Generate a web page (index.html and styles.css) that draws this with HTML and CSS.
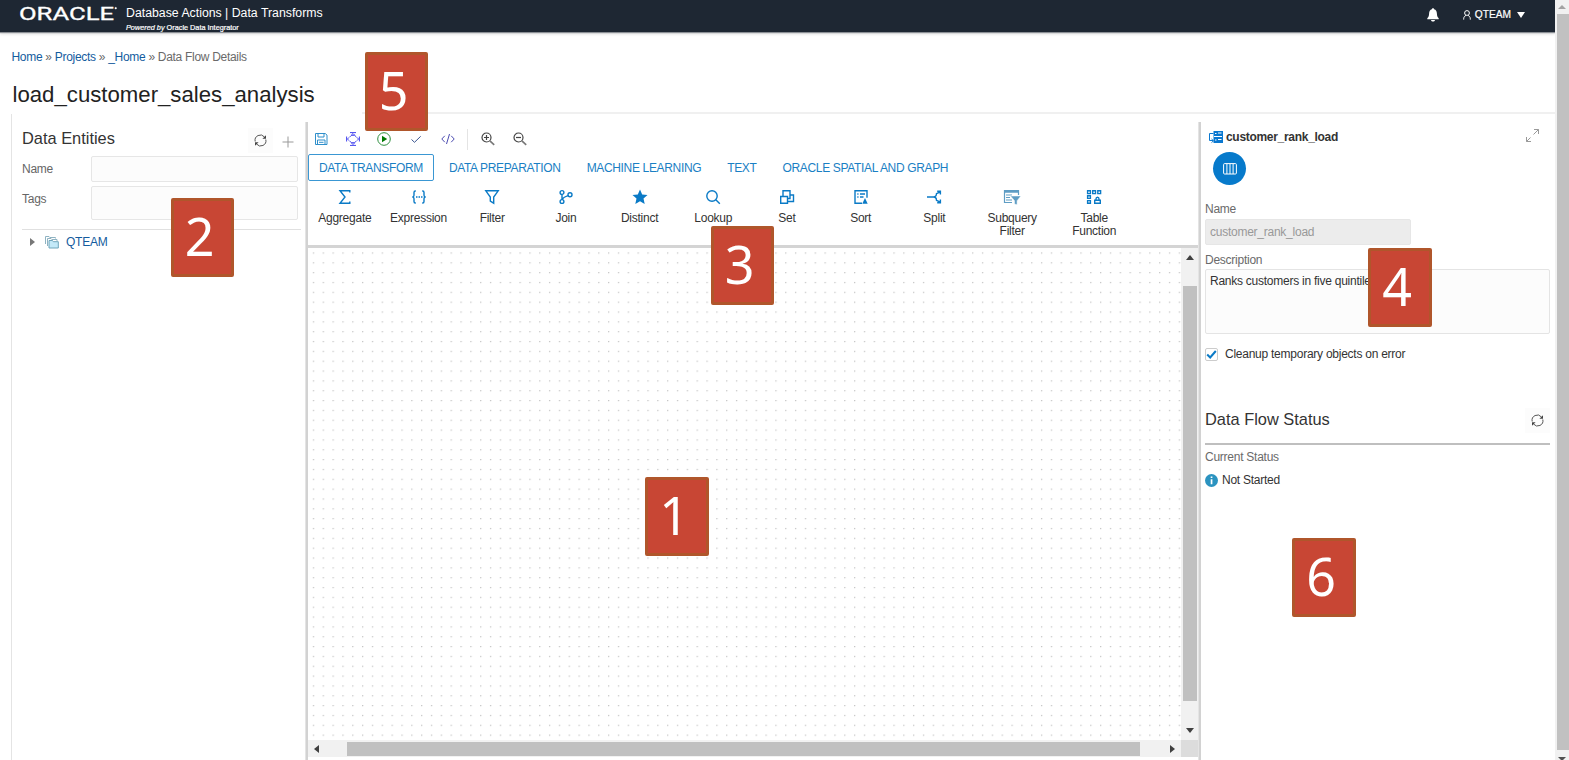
FILE: index.html
```html
<!DOCTYPE html>
<html lang="en">
<head>
<meta charset="utf-8">
<title>Data Transforms</title>
<link rel="stylesheet" href="styles.css">
</head>
<body>
<div class="page">
  <div class="app">
    <header class="topbar">
      <svg class="logo" width="99" height="24" viewBox="0 0 99 24"><text x="0" y="16.500" textLength="95" lengthAdjust="spacingAndGlyphs">ORACLE</text><circle cx="96.700" cy="5.200" r="0.900"/></svg>
      <div class="product">
        <div class="product-name">Database Actions | Data Transforms</div>
        <div class="product-sub"><i>Powered by</i> Oracle Data Integrator</div>
      </div>
      <svg class="bell" width="12" height="14" viewBox="0 0 12 14"><path d="M6 .3c.7 0 1 .4 1.100 1C9 1.800 9.800 3.400 9.900 5.500c.1 2.300.4 3.500 1.800 4.800v.9H.3v-.9C1.700 9 2 7.800 2.100 5.500 2.200 3.400 3 1.800 4.900 1.300c.1-.6.400-1 1.100-1zM4 12h4c-.2 1-1 1.600-2 1.600S4.200 13 4 12z"/></svg>
      <svg class="person" width="8" height="10" viewBox="0 0 8 10"><circle cx="4" cy="3" r="2.400"/><path d="M.7 9.600V8.800C.7 7 1.700 6 3 5.400M7.300 9.600V8.800C7.300 7 6.300 6 5 5.400"/></svg>
      <span class="user">QTEAM</span>
      <svg class="caret" width="8" height="6" viewBox="0 0 8 6"><path d="M0 0h8L4 6z"/></svg>
    </header>
    <nav class="crumbs"><a>Home</a> » <a>Projects</a> » <a>_Home</a> » Data Flow Details</nav>
    <h1 class="title">load_customer_sales_analysis</h1>
    <div class="rule"></div>

    <main class="columns">
      <aside class="entities">
        <div class="entities-head">
          <h2>Data Entities</h2>
          <span class="iconbtn"><svg width="13" height="13" viewBox="0 0 13 13"><path class="ln" d="M1.200 7.500A5.300 5.300 0 0 1 10.500 3M11.800 5.500A5.300 5.300 0 0 1 2.500 10"/><path d="M12 1.200v3.600H8.400zM1 11.800V8.200h3.600z"/></svg></span>
          <svg class="plus" width="12" height="12" viewBox="0 0 12 12"><path d="M6 .5v11M.5 6h11"/></svg>
        </div>
        <label class="field"><span>Name</span><span class="box"></span></label>
        <label class="field tags"><span>Tags</span><span class="box"></span></label>
        <div class="tree">
          <svg class="twist" width="5" height="8" viewBox="0 0 5 8"><path d="M0 0l5 4-5 4z"/></svg>
          <svg class="folders" width="14" height="13" viewBox="0 0 14 13"><path d="M.5 8V.5H4l.8 1h5.700v1M2.500 10V2.500H6l.8 1h5.200V5"/><path class="front" d="M4 12V4.500h3.500l.8 1.200h5V12z"/></svg>
          <a>QTEAM</a>
        </div>
      </aside>
      <div class="splitter"></div>

      <section class="editor">
        <div class="toolbar">
          <svg class="save" viewBox="0 0 14 14"><path d="M1.500 1.500h9.700l1.800 1.600v9.400H1.500zM4 1.500V5h6V1.500M3.500 12.500V8H11v4.500M5 10.300h4.500"/></svg>
          <svg class="fit" viewBox="0 0 14 14"><path d="M4 .6h6M4 13.400h6M.6 4.500v5M13.400 4.500v5"/><path d="M5.200 3.300L7 1.500l1.800 1.800zM5.200 10.700L7 12.500l1.800-1.800zM2.800 5.500L1.500 7l1.300 1.500M11.200 5.500L12.500 7l-1.300 1.500"/><path d="M3.500 5.200l1.700-1.700M10.500 5.200L8.800 3.500M3.500 8.800l1.700 1.700M10.500 8.800l-1.700 1.700"/></svg>
          <svg class="run" viewBox="0 0 14 14"><circle cx="7" cy="7" r="6.300"/><path d="M5 3.800v6.400L10.200 7z"/></svg>
          <svg class="check" viewBox="0 0 14 14"><path d="M2.500 7.500l3 2.800 6.200-6"/></svg>
          <svg class="code" viewBox="0 0 14 14"><path d="M3.800 3.800L.8 7l3 3.200M10.200 3.800l3 3.200-3 3.200M8.500 2l-3 10"/></svg>
          <span class="sep"></span>
          <svg class="zoomi" viewBox="0 0 14 14"><circle cx="5.500" cy="5.500" r="4.500"/><path d="M5.500 3v5M3 5.500h5"/><path class="handle" d="M8.900 8.900l4.300 4"/></svg>
          <svg class="zoomi" viewBox="0 0 14 14"><circle cx="5.500" cy="5.500" r="4.500"/><path d="M3 5.500h5"/><path class="handle" d="M8.900 8.900l4.300 4"/></svg>
        </div>
        <div class="tabs">
          <span class="tab active">DATA TRANSFORM</span><span class="tab">DATA PREPARATION</span><span class="tab">MACHINE LEARNING</span><span class="tab">TEXT</span><span class="tab">ORACLE SPATIAL AND GRAPH</span>
        </div>
        <div class="palette">
          <div class="op"><svg viewBox="0 0 16 16"><path d="M12.800 3.500V1.800H3l5 6.200-5 6.200h9.800v-1.700"/></svg>Aggregate</div>
          <div class="op"><svg viewBox="0 0 16 16"><path d="M4.800 2H4.300C3.200 2 3 2.600 3 3.500v2.800C3 7.400 2.400 8 1.300 8 2.400 8 3 8.600 3 9.700v2.800c0 .9.200 1.500 1.300 1.500h.5M11.200 2h.5C12.800 2 13 2.600 13 3.500v2.800c0 1.100.6 1.700 1.700 1.700-1.100 0-1.700.6-1.700 1.700v2.800c0 .9-.2 1.500-1.300 1.500h-.5"/><path class="dots" d="M5 8h6.500"/></svg>Expression</div>
          <div class="op"><svg viewBox="0 0 16 16"><path d="M1.800 1.800h12.400L9.700 8v6.200l-3.400-2V8z"/></svg>Filter</div>
          <div class="op"><svg viewBox="0 0 16 16"><circle cx="4" cy="3.500" r="1.900"/><circle cx="4" cy="12.500" r="1.900"/><circle cx="12" cy="5.800" r="2"/><path d="M4 5.400v5.200M10.200 6.700C7.500 7.500 5 8.500 4.300 10.600"/></svg>Join</div>
          <div class="op"><svg viewBox="0 0 16 16"><path class="solid" d="M8 .6l2.200 4.900 5.300.6-4 3.500 1.200 5.400L8 12.300 3.300 15l1.200-5.400-4-3.500 5.300-.6z"/></svg>Distinct</div>
          <div class="op"><svg viewBox="0 0 16 16"><circle cx="7" cy="7" r="5.200"/><path d="M10.800 10.800l4 3.900"/></svg>Lookup</div>
          <div class="op"><svg viewBox="0 0 16 16"><path d="M4 7.500V1.800h7v7.700H8.500M1.700 7.500h6.800v6.700H1.700zM11 6h3.500v6.500h-6"/></svg>Set</div>
          <div class="op"><svg viewBox="0 0 16 16"><path d="M9 14.200H2V1.800h12v7"/><path d="M4.300 5h1.200M7 5h5M4.300 8h1.200M7 8h3.500"/><path class="solid" d="M12 9l2.700 5.800H9.300z"/></svg>Sort</div>
          <div class="op"><svg viewBox="0 0 16 16"><path d="M1 8h6.500c2 0 3-1.500 3-3.400L14 3M7.500 8c2 0 3 1.500 3 3.400L14 13M11.200 2.300H14.400v3.200M11.200 13.700h3.200v-3.200"/></svg>Split</div>
          <div class="op wide subq"><svg viewBox="0 0 18 16"><path d="M9 13.500H1.500v-12h14V6"/><path class="band" d="M1.500 2.500h14"/><path d="M3 6h6M3 8.500h4M3 11h6"/><path class="funnel" d="M7.500 7h10.400l-3.800 4.700v4L11.500 15v-3.300z"/></svg>Subquery<br>Filter</div>
          <div class="op wide"><svg viewBox="0 0 16 16"><path d="M1.600 1.800h2.800v2.800H1.600zM6.700 1.800h2.800v2.800H6.700zM11.800 1.800h2.800v2.800h-2.800zM1.600 6.800h2.800v2.600H1.600zM1.600 11.600h2.800v2.700H1.600zM8.700 11.300h5.600v3H8.700zM10 11V10c0-2.400 3-2.400 3 0v1"/></svg>Table<br>Function</div>
        </div>
        <div class="workspace">
          <svg class="grid"><defs><pattern id="dots" x="4.800" y="4.400" width="9.840" height="9.840" patternUnits="userSpaceOnUse"><rect width="1.300" height="1.200"/></pattern></defs><rect width="100%" height="100%" fill="url(#dots)"/></svg>
          <div class="vbar"><svg width="8" height="5" viewBox="0 0 8 5"><path d="M4 0l4 5H0z"/></svg><div class="vthumb"></div><svg width="8" height="5" viewBox="0 0 8 5"><path d="M4 5l4-5H0z"/></svg></div>
          <div class="hbar"><svg width="5" height="8" viewBox="0 0 5 8"><path d="M0 4l5-4v8z"/></svg><div class="hthumb"></div><svg width="5" height="8" viewBox="0 0 5 8"><path d="M5 4L0 0v8z"/></svg></div>
          <div class="corner"></div>
        </div>
      </section>
      <div class="splitter"></div>

      <aside class="props">
        <div class="props-head">
          <svg width="14" height="13" viewBox="0 0 14 13"><path class="solid" d="M4.500 0H14v12H4.500z"/><path class="ln" d="M4.500 2.500h-4v7H4M2.500 8l2 1.800-2 1.800"/><path class="wh" d="M6 2.500h1.500M9 2h3.500M5 5.500h8M6 9h1.500M9 8.500h3.500"/></svg>
          <b>customer_rank_load</b>
          <svg class="expand" width="13" height="13" viewBox="0 0 13 13"><path d="M8 .5h4.500V5M12.500.5L7.500 5.500M.5 8v4.500H5M.5 12.500l4-4"/></svg>
        </div>
        <div class="round"><svg width="14" height="12" viewBox="0 0 14 12"><rect x=".6" y=".6" width="12.800" height="10.400" rx="1"/><path d="M3.900 1v10M7 1v10M10.100 1v10"/></svg></div>
        <div class="lbl">Name</div>
        <div class="ro">customer_rank_load</div>
        <div class="lbl desc-lbl">Description</div>
        <div class="desc">Ranks customers in five quintile</div>
        <div class="cleanup"><span class="cb"><svg width="11" height="11" viewBox="0 0 11 11"><path d="M1.200 5.500l3 3L9.800 2"/></svg></span>Cleanup temporary objects on error</div>
        <div class="status-head"><h2>Data Flow Status</h2><span class="iconbtn"><svg width="13" height="13" viewBox="0 0 13 13"><path class="ln" d="M1.200 7.500A5.300 5.300 0 0 1 10.500 3M11.800 5.500A5.300 5.300 0 0 1 2.500 10"/><path d="M12 1.200v3.600H8.400zM1 11.800V8.200h3.600z"/></svg></span></div>
        <div class="lbl cur">Current Status</div>
        <div class="state"><svg width="13" height="13" viewBox="0 0 13 13"><circle cx="6.500" cy="6.500" r="6.500"/><path d="M5.700 2.500h1.700v1.600H5.700zM5.700 5.200h1.700v5H5.700z"/></svg>Not Started</div>
      </aside>
    </main>
  </div>
  <div class="pagebar"><svg width="8" height="4" viewBox="0 0 8 4"><path fill="#a3a3a3" d="M4 0l4 4H0z"/></svg><div class="pagethumb"></div><svg width="8" height="4" viewBox="0 0 8 4"><path fill="#505050" d="M4 4l4-4H0z"/></svg></div>
  <div class="callout c1">1</div>
  <div class="callout c2">2</div>
  <div class="callout c3">3</div>
  <div class="callout c4">4</div>
  <div class="callout c5">5</div>
  <div class="callout c6">6</div>
</div>
</body>
</html>
```
FILE: styles.css
```css
* { box-sizing: border-box; }
body { margin: 0; font-family: "Liberation Sans", Arial, sans-serif; font-size: 12px; letter-spacing: -.25px; line-height: 13px; color: #333; background: #fff; }
svg { display: block; flex: none; }
h1, h2 { margin: 0; font-weight: 400; letter-spacing: 0; }
a { color: #145c9e; }
.page { position: relative; display: flex; width: 1569px; height: 760px; overflow: hidden; }
.app { width: 1555px; height: 760px; display: flex; flex-direction: column; }

.topbar { height: 32px; background: #1e2733; display: flex; align-items: flex-start; padding: 0 30px 0 19px; color: #fff; box-shadow: 0 1px 1px #8b8f95, 0 2px 3px #ddd; flex: none; letter-spacing: 0; }
.logo { margin-top: 3px; fill: #fff; font: 400 17.500px Roboto, sans-serif; stroke: #fff; stroke-width: .3; }
.product { margin: 6px auto 0 8px; }
.product-name { font-size: 12.300px; line-height: 15px; white-space: nowrap; }
.product-sub { font-size: 7.300px; line-height: 9px; margin-top: 2px; white-space: nowrap; -webkit-text-stroke: .2px #fff; }
.bell { margin-top: 8px; fill: #fff; }
.person { margin: 10px 4px 0 24px; fill: none; stroke: #fff; }
.user { font-size: 10.200px; line-height: 12px; margin-top: 9px; -webkit-text-stroke: .2px #fff; }
.caret { margin: 12px 0 0 6px; fill: #fff; }

.crumbs { margin: 19px 0 0 11.500px; height: 13px; color: #6a6a6a; flex: none; letter-spacing: -.3px; }
.title { margin: 17px 0 0 12.500px; font-size: 22.200px; line-height: 28px; height: 31px; color: #222; flex: none; }
.rule { height: 2px; margin-left: 362px; background: #f0f0f0; flex: none; }

.columns { display: flex; flex: 1; min-height: 0; }
.splitter { width: 3px; background: #d2d2d2; margin-top: 8px; border-left: 1px solid #e4e4e4; }
h2 { font-size: 16.400px; line-height: 20px; color: #333; }
.iconbtn { width: 25px; height: 25px; background: #fcfcfc; display: flex; align-items: center; justify-content: center; fill: #444; }
.iconbtn .ln { fill: none; stroke: #555; }

.entities { width: 294px; margin-left: 11px; border-left: 1px solid #e4e4e4; padding: 14px 4px 0 10px; }
.entities-head { display: flex; height: 28px; }
.entities-head .iconbtn { margin: 0 0 0 auto; }
.plus { margin: 8px 7px 0 9px; stroke: #999; }
.field { display: flex; width: 276px; line-height: 27px; color: #666; }
.field span:first-child { width: 69px; }
.box { flex: 1; height: 26px; border: 1px solid #e6e6e6; background: #fcfcfc; border-radius: 2px; }
.tags { margin-top: 3px; }
.tags .box { height: 34px; }
.tree { margin-top: 9px; height: 25px; border-top: 1px solid #e0e0e0; display: flex; align-items: center; padding-left: 8px; }
.twist { fill: #777; }
.folders { margin: 0 7px 0 10px; fill: none; stroke: #8fb3c2; }
.folders .front { fill: #c3e9f8; stroke: #6fa5bb; }

.editor { width: 890px; display: flex; flex-direction: column; }
.toolbar { height: 40px; display: flex; align-items: center; padding: 10px 0 0 6px; gap: 17.700px; flex: none; fill: none; }
.toolbar svg { width: 14px; height: 14px; }
.save { stroke: #2f8fcb; }
.fit { stroke: #4545ef; }
.run { stroke: #2f8f3f; }
.run path { fill: #007a00; stroke: none; }
.check, .code { stroke: #3a5590; }
.code { stroke: #4b4bb0; }
.zoomi { stroke: #444; stroke-width: 1.200; }
.zoomi .handle { stroke: #777; stroke-width: 1.600; }
.sep { width: 1px; height: 21px; background: #e4e4e4; margin: 0 -5px 0 -5px; }
.tabs { display: flex; gap: 4px; height: 27px; flex: none; }
.tab { border: 1px solid transparent; padding: 0 10px; line-height: 26px; color: #1a7fc4; white-space: nowrap; letter-spacing: -.34px; }
.tab.active { border-color: #3a97d3; border-radius: 2px; }
.palette { display: flex; height: 67px; border-bottom: 3px solid #d4d4d4; padding-top: 8px; flex: none; }
.op { width: 73.700px; display: flex; flex-direction: column; align-items: center; text-align: center; }
.op.wide { width: 82px; }
.op svg { width: 16px; height: 16px; margin-bottom: 7px; fill: none; stroke: #0a7ac6; stroke-width: 1.400; }
.op .solid { fill: #0a7ac6; stroke: none; }
.op .dots { stroke-dasharray: 1.500 1; }
.op.subq svg { width: 18px; stroke: #5f9dc4; stroke-width: 1.200; }
.op .band { stroke-width: 2.500; }
.op .funnel { fill: #5f9dc4; stroke: #fff; stroke-width: .5; }
.workspace { display: grid; grid-template: 492px 17px / 1fr 17px; }
.grid { width: 100%; height: 100%; fill: #c4c4c4; }
.vbar { background: #f1f1f1; display: flex; flex-direction: column; align-items: center; padding: 7px 1px; fill: #404040; }
.vthumb { width: 14px; height: 415px; background: #c0c0c0; margin: 26px 0 auto; }
.hbar { background: #f1f1f1; display: flex; align-items: center; padding: 0 6px; fill: #404040; }
.hthumb { width: 793px; height: 14px; background: #c0c0c0; margin: 0 auto 0 28px; }
.corner { background: #dcdcdc; }

.props { flex: 1; padding: 15px 5.500px 0 4px; }
.props-head { display: flex; height: 23px; padding: 0 11px 0 4px; }
.props-head svg { margin: 2px 3px 0 0; }
.props-head .solid { fill: #0a78d0; }
.props-head .ln { fill: none; stroke: #0a78d0; }
.props-head .wh { stroke: #fff; }
.props-head b { line-height: 16px; letter-spacing: -.3px; }
.props-head .expand { margin: 0 0 0 auto; fill: none; stroke: #999; }
.round { margin-left: 8px; width: 33px; height: 33px; border-radius: 50%; background: #077acb; display: flex; align-items: center; justify-content: center; fill: none; stroke: #fff; }
.lbl { color: #6a6a6a; margin-top: 18px; }
.ro { width: 206px; height: 26px; margin-top: 3px; background: #ececec; border: 1px solid #e6e6e6; color: #999; padding-left: 4px; line-height: 25px; border-radius: 2px; }
.desc-lbl { margin-top: 9px; }
.desc { height: 65px; margin-top: 2px; background: #fcfcfc; border: 1px solid #e4e4e4; border-radius: 2px; padding: 5px 4px; }
.cleanup { display: flex; margin-top: 14px; gap: 7px; }
.cb { width: 13px; height: 13px; border: 1px solid #ccc; border-radius: 2px; fill: none; stroke: #0a7ac6; stroke-width: 2; }
.status-head { display: flex; justify-content: space-between; height: 36px; margin-top: 48px; border-bottom: 2px solid #bfbfbf; }
.status-head .iconbtn { margin: -1px 0 0; }
.cur { margin-top: 6px; }
.state { display: flex; margin-top: 10px; gap: 4px; }
.state circle { fill: #2b93c0; }
.state path { fill: #fff; }

.pagebar { width: 14px; background: #f1f1f1; display: flex; flex-direction: column; align-items: center; padding-top: 5px; }
.pagethumb { width: 12px; height: 736px; margin: 5px 0 7px 1px; background: #c1c1c1; flex: none; }

/* Numbered markers lie over the interface. */
.callout { position: absolute; width: 63px; height: 79px; background: #c84634; border: 3px solid #b0562b; border-radius: 2px; color: #fff; font: 52px/70px "Noto Sans", sans-serif; letter-spacing: 0; text-align: center; padding-right: 6px; }
.c1 { left: 645px; top: 477px; width: 64px; }
.c2 { left: 171px; top: 198px; }
.c3 { left: 711px; top: 226px; }
.c4 { left: 1368px; top: 248px; width: 64px; }
.c5 { left: 365px; top: 52px; }
.c6 { left: 1292px; top: 538px; width: 64px; }
```
